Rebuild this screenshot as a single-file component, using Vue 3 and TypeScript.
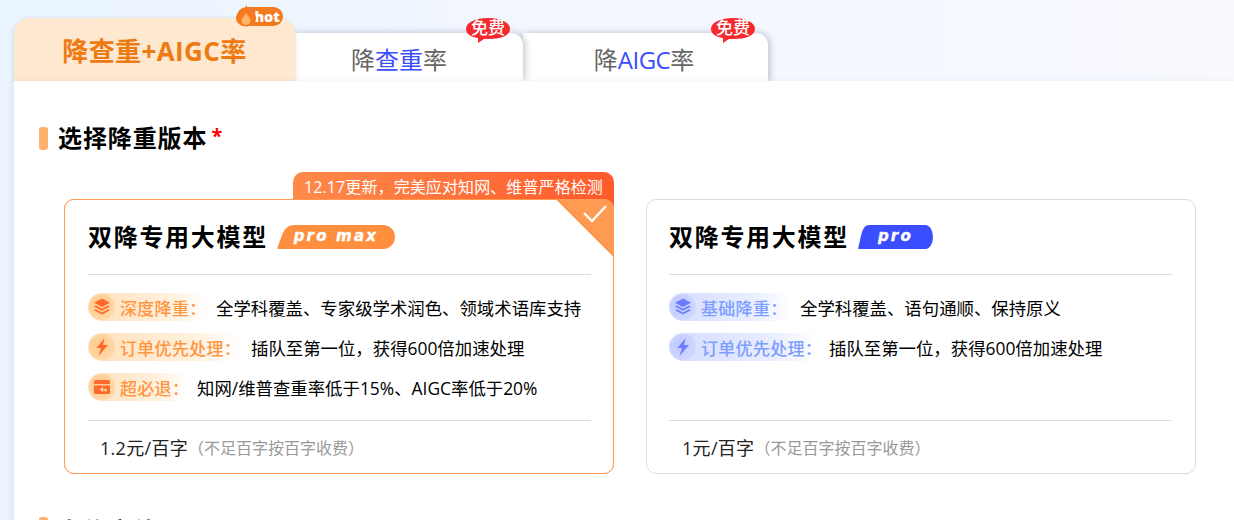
<template>
  <div class="page">
    <div class="tabs">
      <div v-for="tab in tabs" :key="tab.id" class="tab" :class="[`tab-${tab.id}`, { active: tab.active }]">
        <span>{{ tab.before }}<em>{{ tab.mark }}</em>{{ tab.after }}</span>
        <span v-if="tab.active" class="hot">
          <svg class="flame" viewBox="0 0 22 24" width="20" height="23">
            <path d="M11 0c1 3 3 5 5 6 0 1 0 2 .5 2.500C17 8 17.500 7.500 17.500 7 20 9.500 22 12 22 15c0 5-5 9-11 9S0 20 0 15C0 11 3 8.500 6 6c.5 1 .7 2 1 3C9 7 11 4 11 0z" fill="#f47a1f" />
            <path d="M11 9c1 3 5 5 5 9 0 3-2.500 4.500-5 4.500S6 21 6 18c0-4 4-5 5-9z" fill="#ffb566" />
          </svg>
          <b>hot</b>
        </span>
        <span v-else class="free">
          <svg viewBox="0 0 46 26" width="46" height="26">
            <path d="M23 1c12 0 22 4 22 11s-10 10-22 10h-4l-6 4 0-5C6 20 1 17 1 12 1 5 11 1 23 1z" fill="#f6292d" />
          </svg>
          <b>免费</b>
        </span>
      </div>
    </div>

    <main class="panel">
      <h2 class="heading"><i></i>选择降重版本<span>*</span></h2>

      <div class="cards">
        <section v-for="card in cards" :key="card.id" class="card" :class="card.id">
          <div v-if="card.notice" class="notice">{{ card.notice }}</div>
          <div v-if="card.id === 'max'" class="corner">
            <svg viewBox="0 0 26 20" width="26" height="20">
              <path d="M2 9l8 8L24 2" fill="none" stroke="#fff" stroke-width="2.400" />
            </svg>
          </div>
          <div class="card-title">
            <h3>双降专用大模型</h3>
            <span class="badge">
              <svg viewBox="0 0 118 24" preserveAspectRatio="none">
                <path :d="card.badgePath" :fill="card.color" />
              </svg>
              <b>{{ card.badge }}</b>
            </span>
          </div>
          <div class="rows">
            <div v-for="row in card.rows" :key="row.label" class="row">
              <span class="pill" :style="{ width: row.width + 'px' }">
                <span class="pill-icon">
                  <svg viewBox="0 0 20 20" width="20" height="20">
                    <template v-if="row.icon === 'layers'">
                      <path d="M10 1.500l8 4.200-8 4.300-8-4.300z" />
                      <path d="M3.800 8.400L10 11.700l6.200-3.300L18 9.400 10 13.700 2 9.400z" />
                      <path d="M3.800 12.200L10 15.500l6.200-3.300 1.800 1-8 4.300-8-4.300z" />
                    </template>
                    <path v-else-if="row.icon === 'bolt'" d="M12.500 1L4.500 11H9l-2.500 8L16 8h-5z" />
                    <path v-else fill-rule="evenodd" d="M3.500 3h13A1.500 1.500 0 0 1 18 4.500V7H2V4.500A1.500 1.500 0 0 1 3.500 3zM2 8.500h16v7a1.500 1.500 0 0 1-1.500 1.500h-13A1.500 1.500 0 0 1 2 15.500zM11 9.500l-3.500 3 3.500 2.800v-1.800h2v1.800l2-1.500v-1.800h-4z" />
                  </svg>
                </span>
                <span class="pill-label">{{ row.label }}&#xff1a;</span>
              </span>
              <span class="row-text">{{ row.text }}</span>
            </div>
          </div>
          <div class="price">
            <span>{{ card.price }}</span>
            <small>&#xff08;不足百字按百字收费&#xff09;</small>
          </div>
        </section>
      </div>

      <h2 class="heading next"><i></i>上传文件</h2>
    </main>
  </div>
</template>

<script setup lang="ts">
interface Row {
  icon: string;
  label: string;
  text: string;
  width: number;
}

interface Card {
  id: string;
  notice?: string;
  badge: string;
  badgePath: string;
  color: string;
  price: string;
  rows: Row[];
}

const badgePath = 'M1 24Q0 24 .5 22.500L5 10C8 3 11 0 18 0H106a12 12 0 0 1 0 24z';

const tabs = [
  { id: 'both', before: '降查重+AIGC率', mark: '', after: '', active: true },
  { id: 'dup', before: '降', mark: '查重', after: '率', active: false },
  { id: 'aigc', before: '降', mark: 'AIGC', after: '率', active: false },
];

const cards: Card[] = [
  {
    id: 'max',
    notice: '12.17更新\uff0c完美应对知网、维普严格检测',
    badge: 'pro max',
    badgePath,
    color: '#ff8f3f',
    price: '1.2元/百字',
    rows: [
      { icon: 'layers', label: '深度降重', text: '全学科覆盖、专家级学术润色、领域术语库支持', width: 128 },
      { icon: 'bolt', label: '订单优先处理', text: '插队至第一位\uff0c获得600倍加速处理', width: 163 },
      { icon: 'wallet', label: '超必退', text: '知网/维普查重率低于15%、AIGC率低于20%', width: 109 },
    ],
  },
  {
    id: 'pro',
    badge: 'pro',
    badgePath,
    color: '#3a4dff',
    price: '1元/百字',
    rows: [
      { icon: 'layers', label: '基础降重', text: '全学科覆盖、语句通顺、保持原义', width: 131 },
      { icon: 'bolt', label: '订单优先处理', text: '插队至第一位\uff0c获得600倍加速处理', width: 160 },
    ],
  },
];
</script>

<style>
html,
body {
  margin: 0;
  height: 100%;
  overflow: hidden;
}
</style>

<style scoped>
.page {
  width: 1234px;
  height: 520px;
  overflow: hidden;
  padding: 18px 0 0 14px;
  box-sizing: border-box;
  background: linear-gradient(90deg, #e9f4ff 0%, #f4f7ff 50%, #f8f9ff 100%);
  font-family: "Open Sans", "Noto Sans CJK SC", sans-serif;
  color: #000;
}

.tabs {
  display: flex;
  align-items: flex-end;
  height: 63px;
}

.tab {
  position: relative;
  display: flex;
  align-items: center;
  justify-content: center;
  box-sizing: border-box;
  height: 48px;
  padding-top: 2px;
  background: #fff;
  border-radius: 0 12px 0 0;
  box-shadow: 2px 0 7px rgba(40, 50, 80, 0.28);
  color: #666;
  font-size: 24px;
}

.tab em {
  font-style: normal;
  color: #3a4dff;
}

.tab-both {
  z-index: 3;
  width: 281px;
  height: 63px;
  padding-top: 0;
  background: #ffe8d0;
  border-radius: 16px 16px 0 0;
  box-shadow: 0 1px 4px rgba(60, 60, 80, 0.2);
  color: #ee7a12;
  font-size: 26px;
  font-weight: 700;
  letter-spacing: 0.4px;
}

.tab-dup {
  z-index: 2;
  width: 228px;
  padding-right: 20px;
}

.tab-aigc {
  z-index: 1;
  width: 245px;
  padding-right: 3px;
}

.tab-aigc em {
  letter-spacing: -0.5px;
}

.hot {
  position: absolute;
  top: -11px;
  right: 12px;
  display: flex;
  align-items: center;
  justify-content: flex-end;
  width: 46px;
  height: 19px;
  border-radius: 10px;
  background: #f47a1f;
  letter-spacing: 0;
}

.flame {
  position: absolute;
  left: -1px;
  top: -3px;
}

.hot b {
  margin-right: 3px;
  color: #fff;
  font-family: "Open Sans", sans-serif;
  font-size: 14.500px;
  font-weight: 800;
  line-height: 19px;
}

.free {
  position: absolute;
  top: -16px;
  right: 12px;
  width: 46px;
  height: 26px;
}

.free svg {
  display: block;
}

.free b {
  position: absolute;
  left: 0;
  top: 0;
  width: 46px;
  height: 22px;
  line-height: 22px;
  text-align: center;
  color: #fff;
  font-size: 17px;
  font-weight: 500;
}

.panel {
  position: relative;
  z-index: 4;
  height: 439px;
  padding: 45px 38px 0 25px;
  background: #fff;
  box-shadow: -2px 0 5px rgba(60, 80, 120, 0.08);
}

.heading {
  display: flex;
  align-items: center;
  height: 24px;
  margin: 0;
  font-size: 24px;
  font-weight: 700;
  letter-spacing: 0.9px;
  line-height: 24px;
}

.heading i {
  width: 9px;
  height: 23px;
  margin-right: 10px;
  border-radius: 3px;
  background: #ffb06d;
}

.heading span {
  margin: -4px 0 0 4px;
  color: #f00;
  font-size: 20px;
}

.heading.next {
  margin-top: 45px;
}

.heading.next i {
  margin-top: -6px;
}

.cards {
  display: grid;
  grid-template-columns: 550px 550px;
  gap: 32px;
  margin: 49px 0 0 25px;
}

.card {
  position: relative;
  box-sizing: border-box;
  display: flex;
  flex-direction: column;
  height: 275px;
  padding: 0 22px 0 23px;
  border: 1px solid #ddd;
  border-radius: 10px;
  background: #fff;
}

.card.pro {
  padding-left: 22px;
  padding-right: 23px;
}

.card.max {
  border-color: #ff9a52;
}

.notice {
  position: absolute;
  top: -28px;
  right: -1px;
  box-sizing: border-box;
  width: 321px;
  height: 34px;
  padding-top: 4px;
  border-radius: 10px 10px 0 0;
  background: linear-gradient(90deg, #ff8a4a, #ff5a2c);
  color: #fff;
  font-size: 16px;
  letter-spacing: 0.1px;
  line-height: 22px;
  text-align: center;
  z-index: 0;
}

.card.max::before {
  content: '';
  position: absolute;
  inset: -1px;
  border: 1px solid #ff9a52;
  border-radius: 10px;
  background: #fff;
  z-index: 1;
}

.corner {
  position: absolute;
  top: -1px;
  right: -1px;
  z-index: 2;
  width: 58px;
  height: 58px;
  border-radius: 0 10px 0 0;
  background: linear-gradient(45deg, transparent 50%, #ff9a52 50%);
}

.corner svg {
  position: absolute;
  top: 5px;
  right: 6px;
}

.card-title,
.rows,
.price {
  position: relative;
  z-index: 2;
}

.card-title {
  display: flex;
  align-items: center;
  gap: 9px;
  height: 75px;
  border-bottom: 1px solid #ddd;
  box-sizing: border-box;
}

.card-title h3 {
  margin: 0 0 4px;
  font-size: 24px;
  font-weight: 700;
  letter-spacing: 1.7px;
}

.badge {
  position: relative;
  display: block;
  width: 118px;
  height: 24px;
  margin-bottom: 1px;
}

.pro .badge {
  width: 75px;
}

.badge svg {
  position: absolute;
  inset: 0;
  width: 100%;
  height: 100%;
}

.badge b {
  position: absolute;
  inset: 0;
  text-align: center;
  color: #fff;
  font-family: "DejaVu Sans", sans-serif;
  font-size: 15px;
  font-style: italic;
  font-weight: 700;
  letter-spacing: 2.2px;
  line-height: 23px;
  -webkit-text-stroke: 0.4px #fff;
}

.rows {
  display: flex;
  flex-direction: column;
  gap: 12px;
  height: 146px;
  box-sizing: border-box;
  padding-top: 18px;
  border-bottom: 1px solid #ddd;
}

.row {
  display: flex;
  align-items: center;
  height: 28px;
}

.pill {
  display: flex;
  align-items: center;
  flex: none;
  height: 28px;
  border-radius: 14px;
  background: linear-gradient(90deg, #ffe0ba 0%, #fff1df 65%, #fff 92%);
}

.pro .pill {
  background: linear-gradient(90deg, #d5dcff 0%, #e9eeff 65%, #fff 92%);
}

.pill-icon {
  display: flex;
  align-items: center;
  justify-content: center;
  flex: none;
  width: 26px;
  height: 26px;
  margin: 0 5px 0 1px;
  border-radius: 50%;
  background: radial-gradient(circle at 35% 40%, #ffcb8e, #ffdcb0);
}

.pro .pill-icon {
  background: radial-gradient(circle at 35% 40%, #c0caff, #d5dcff);
}

.pill-icon svg {
  fill: #ff6a2b;
}

.pro .pill-icon svg {
  fill: #6a7dff;
}

.pill-label {
  color: #ff9640;
  font-size: 17px;
  font-weight: 500;
  letter-spacing: 0.3px;
  white-space: nowrap;
}

.pro .pill-label {
  color: #7d9dff;
}

.row-text {
  font-size: 17.4px;
  white-space: nowrap;
}

.price {
  display: flex;
  align-items: center;
  height: 52px;
  padding-left: 12px;
  color: #222;
  font-size: 18px;
  letter-spacing: 0.3px;
}

.pro .price {
  padding-left: 13px;
}

.price small {
  color: #999;
  font-size: 16px;
  letter-spacing: 0;
}
</style>
